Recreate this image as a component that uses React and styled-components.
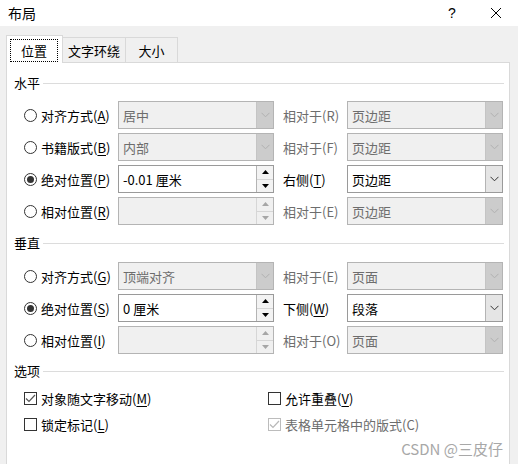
import React from 'react';
import styled, { createGlobalStyle, css } from 'styled-components';

const Global = createGlobalStyle`
  html, body { margin: 0; padding: 0; }
  body {
    font-family: "Noto Sans CJK SC", "Microsoft YaHei", sans-serif;
    font-size: 13px;
    color: #000;
    background: #f0f0f0;
  }
  * { box-sizing: border-box; }
`;

const Window = styled.div`
  position: relative;
  width: 518px;
  height: 464px;
  overflow: hidden;
  background: #f0f0f0;
  display: flex;
  flex-direction: column;
`;

const TitleBar = styled.div`
  height: 26px;
  flex-shrink: 0;
  background: #fff;
  display: flex;
  align-items: center;
  padding-left: 8px;
`;

const Title = styled.div`
  flex: 1;
  font-size: 14px;
  line-height: 26px;
`;

const TitleButton = styled.div`
  width: 44px;
  height: 26px;
  display: flex;
  align-items: center;
  justify-content: center;
  font-family: "Liberation Sans", sans-serif;
  font-size: 14px;
  color: #000;
`;

const TabStrip = styled.div`
  position: relative;
  z-index: 1;
  display: flex;
  align-items: flex-end;
  padding: 9px 0 0 6px;
  margin-bottom: -1px;
  flex-shrink: 0;
`;

const ActiveTab = styled.div`
  width: 57px;
  height: 28px;
  border: 1px solid #d9d9d9;
  border-bottom: none;
  background: #fff;
  padding: 3px 4px 0 3px;
  display: flex;
`;

const Focus = styled.div`
  width: 48px;
  height: 23px;
  border: 1px dotted #000;
  display: flex;
  align-items: center;
  justify-content: center;
  font-size: 13px;
`;

const Tab = styled.div`
  width: ${p => p.$w}px;
  height: 26px;
  border: 1px solid #d9d9d9;
  border-left: none;
  background: #f0f0f0;
  display: flex;
  align-items: center;
  justify-content: center;
  font-size: 13px;
`;

const Panel = styled.div`
  flex-shrink: 0;
  margin-left: 6px;
  width: 504px;
  height: 430px;
  border: 1px solid #d9d9d9;
  background: #fff;
  padding: 12px 5px 0 7px;
`;

const SectionHeader = styled.div`
  display: flex;
  align-items: center;
  gap: 3px;
  height: 16px;
  margin-top: ${p => p.$mt || 0}px;
`;

const SectionTitle = styled.span`
  font-size: 13px;
  line-height: 16px;
`;

const SectionLine = styled.div`
  flex: 1;
  height: 1px;
  background: #dcdcdc;
`;

const Rows = styled.div`
  display: flex;
  flex-direction: column;
  gap: 4px;
  margin-top: ${p => p.$mt}px;
  padding-left: 10px;
`;

const Row = styled.div`
  display: grid;
  grid-template-columns: 94px 156px 73px 156px;
  height: 28px;
  align-items: center;
`;

const OptLabel = styled.label`
  display: flex;
  align-items: center;
  gap: 4px;
  font-size: 13px;
  white-space: nowrap;
  color: ${p => (p.$disabled ? '#6d6d6d' : '#000')};
  u { text-underline-offset: 2px; }
`;

const Radio = styled.span`
  width: 13px;
  height: 13px;
  border-radius: 50%;
  border: 1px solid #333;
  background: #fff;
  display: flex;
  align-items: center;
  justify-content: center;
  flex-shrink: 0;
  &::after {
    content: '';
    width: 7px;
    height: 7px;
    border-radius: 50%;
    background: ${p => (p.$checked ? '#333' : 'transparent')};
  }
`;

const Field = styled.div`
  height: 28px;
  display: flex;
  align-items: stretch;
  border: 1px solid ${p => (p.$disabled ? '#b4b4b4' : '#9a9a9a')};
  background: ${p => (p.$disabled ? '#f0f0f0' : '#fff')};
`;

const Value = styled.div`
  flex: 1;
  display: flex;
  align-items: center;
  padding-left: 4px;
  font-size: 13px;
  color: ${p => (p.$disabled ? '#6d6d6d' : '#000')};
  white-space: nowrap;
`;

const DropBtn = styled.div`
  width: 17px;
  display: flex;
  align-items: center;
  justify-content: center;
  ${p =>
    p.$disabled
      ? css`
          background: #cccccc;
          border-left: 1px solid #c4c4c4;
        `
      : css`
          background: #e5e5e5;
          border-left: 1px solid #b4b4b4;
        `}
`;

const SpinCol = styled.div`
  width: 17px;
  display: flex;
  flex-direction: column;
  border-left: 1px solid ${p => (p.$disabled ? '#d6d6d6' : '#b4b4b4')};
`;

const SpinHalf = styled.div`
  flex: 1;
  display: flex;
  align-items: center;
  justify-content: center;
  background: ${p => (p.$disabled ? '#f0f0f0' : '#f3f3f3')};
  & + & {
    border-top: 1px solid ${p => (p.$disabled ? '#d6d6d6' : '#b4b4b4')};
  }
`;

const RightLabel = styled.div`
  padding-left: 9px;
  font-size: 13px;
  white-space: nowrap;
  color: ${p => (p.$disabled ? '#6d6d6d' : '#000')};
  u { text-underline-offset: 2px; }
`;

const CheckRows = styled.div`
  margin-top: 6px;
  padding-left: 10px;
  display: flex;
  flex-direction: column;
`;

const CheckRow = styled.div`
  display: grid;
  grid-template-columns: 244px 1fr;
  height: 26px;
  align-items: center;
`;

const CheckBox = styled.span`
  width: 13px;
  height: 13px;
  border: 1px solid ${p => (p.$disabled ? '#bcbcbc' : '#333')};
  background: #fff;
  display: flex;
  align-items: center;
  justify-content: center;
  flex-shrink: 0;
`;

const Watermark = styled.div`
  position: absolute;
  right: 15px;
  bottom: 5px;
  font-size: 15px;
  color: #a8a8a8;
  white-space: nowrap;
`;

const Chevron = ({ disabled }) => (
  <svg width="9" height="6" viewBox="0 0 9 6">
    <polyline
      points="0.5,0.8 4.5,4.8 8.5,0.8"
      fill="none"
      stroke={disabled ? '#b0b0b0' : '#333'}
      strokeWidth="1"
    />
  </svg>
);

const Tri = ({ up, disabled }) => (
  <svg width="7" height="4" viewBox="0 0 7 4">
    <polygon
      points={up ? '0,4 7,4 3.5,0' : '0,0 7,0 3.5,4'}
      fill={disabled ? '#a6a6a6' : '#000'}
    />
  </svg>
);

const Check = ({ disabled }) => (
  <svg width="11" height="9" viewBox="0 0 11 9">
    <polyline
      points="1,4.5 4,7.5 10,1"
      fill="none"
      stroke={disabled ? '#b8b8b8' : '#555'}
      strokeWidth="1.2"
    />
  </svg>
);

const Label = ({ text, k }) => (
  <span>
    {text}(<u>{k}</u>)
  </span>
);

const Select = ({ value, disabled }) => (
  <Field $disabled={disabled}>
    <Value $disabled={disabled}>{value}</Value>
    <DropBtn $disabled={disabled}>
      <Chevron disabled={disabled} />
    </DropBtn>
  </Field>
);

const Spin = ({ value, disabled }) => (
  <Field $disabled={disabled}>
    <Value $disabled={disabled}>{value}</Value>
    <SpinCol $disabled={disabled}>
      <SpinHalf $disabled={disabled}>
        <Tri up disabled={disabled} />
      </SpinHalf>
      <SpinHalf $disabled={disabled}>
        <Tri disabled={disabled} />
      </SpinHalf>
    </SpinCol>
  </Field>
);

const horizontal = [
  { label: '对齐方式', k: 'A', kind: 'select', value: '居中', right: '相对于(R)', rv: '页边距' },
  { label: '书籍版式', k: 'B', kind: 'select', value: '内部', right: '相对于(F)', rv: '页边距' },
  { label: '绝对位置', k: 'P', kind: 'spin', value: '-0.01 厘米', checked: true, rightK: ['右侧', 'T'], rv: '页边距' },
  { label: '相对位置', k: 'R', kind: 'spin', value: '', right: '相对于(E)', rv: '页边距' },
];

const vertical = [
  { label: '对齐方式', k: 'G', kind: 'select', value: '顶端对齐', right: '相对于(E)', rv: '页面' },
  { label: '绝对位置', k: 'S', kind: 'spin', value: '0 厘米', checked: true, rightK: ['下侧', 'W'], rv: '段落' },
  { label: '相对位置', k: 'I', kind: 'spin', value: '', right: '相对于(O)', rv: '页面' },
];

const PosRow = ({ r }) => {
  const active = !!r.checked;
  return (
    <Row>
      <OptLabel>
        <Radio $checked={active} />
        <Label text={r.label} k={r.k} />
      </OptLabel>
      {r.kind === 'select' ? (
        <Select value={r.value} disabled={!active} />
      ) : (
        <Spin value={r.value} disabled={!active} />
      )}
      {active ? (
        <RightLabel>
          <Label text={r.rightK[0]} k={r.rightK[1]} />
        </RightLabel>
      ) : (
        <RightLabel $disabled>{r.right}</RightLabel>
      )}
      <Select value={r.rv} disabled={!active} />
    </Row>
  );
};

export default function App() {
  return (
    <>
      <Global />
      <Window>
        <TitleBar>
          <Title>布局</Title>
          <TitleButton>?</TitleButton>
          <TitleButton>
            <svg width="12" height="12" viewBox="0 0 12 12">
              <path d="M1 1 L11 11 M11 1 L1 11" stroke="#000" strokeWidth="1" fill="none" />
            </svg>
          </TitleButton>
        </TitleBar>
        <TabStrip>
          <ActiveTab>
            <Focus>位置</Focus>
          </ActiveTab>
          <Tab $w={63}>文字环绕</Tab>
          <Tab $w={52}>大小</Tab>
        </TabStrip>
        <Panel>
          <SectionHeader>
            <SectionTitle>水平</SectionTitle>
            <SectionLine />
          </SectionHeader>
          <Rows $mt={10}>
            {horizontal.map((r, i) => (
              <PosRow key={i} r={r} />
            ))}
          </Rows>
          <SectionHeader $mt={10}>
            <SectionTitle>垂直</SectionTitle>
            <SectionLine />
          </SectionHeader>
          <Rows $mt={11}>
            {vertical.map((r, i) => (
              <PosRow key={i} r={r} />
            ))}
          </Rows>
          <SectionHeader $mt={9}>
            <SectionTitle>选项</SectionTitle>
            <SectionLine />
          </SectionHeader>
          <CheckRows>
            <CheckRow>
              <OptLabel>
                <CheckBox>
                  <Check />
                </CheckBox>
                <Label text="对象随文字移动" k="M" />
              </OptLabel>
              <OptLabel>
                <CheckBox />
                <Label text="允许重叠" k="V" />
              </OptLabel>
            </CheckRow>
            <CheckRow>
              <OptLabel>
                <CheckBox />
                <Label text="锁定标记" k="L" />
              </OptLabel>
              <OptLabel $disabled>
                <CheckBox $disabled>
                  <Check disabled />
                </CheckBox>
                <span>表格单元格中的版式(C)</span>
              </OptLabel>
            </CheckRow>
          </CheckRows>
        </Panel>
        <Watermark>CSDN @三皮仔</Watermark>
      </Window>
    </>
  );
}
